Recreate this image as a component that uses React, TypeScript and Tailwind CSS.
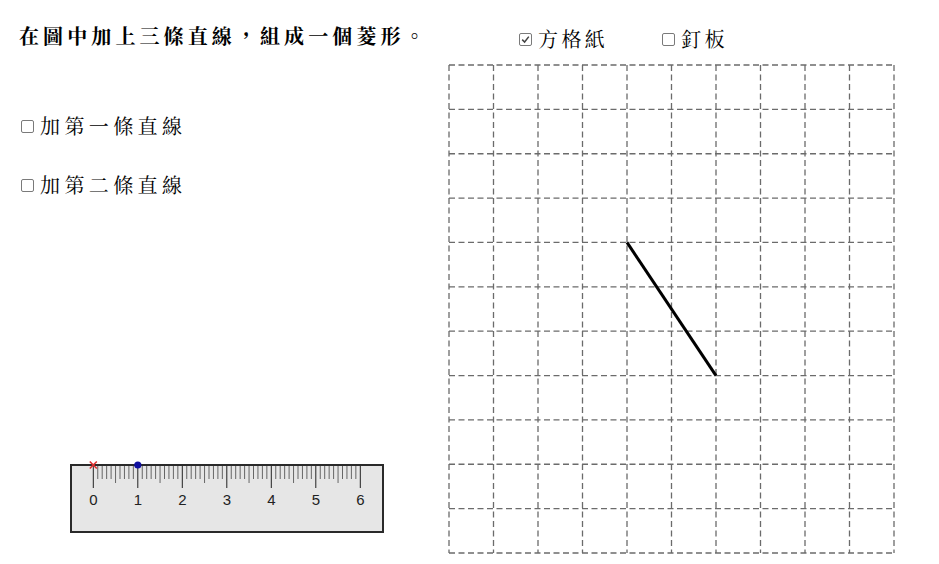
import React from "react";

const CJK = "font-['Noto_Serif_CJK_TC','Noto_Sans_CJK_TC',serif]";

// small checkbox square like the GeoGebra ones
const Box = ({ checked = false }: { checked?: boolean }) => (
  <span className="inline-flex w-[13px] h-[13px] shrink-0 items-center justify-center rounded-[2px] border-[1.5px] border-[#7a7a7a] bg-white">
    {checked && (
      <svg width="9" height="9" viewBox="0 0 9 9">
        <path d="M1.2 4.6 L3.6 7 L7.8 1.6" fill="none" stroke="#444" strokeWidth="1.5" />
      </svg>
    )}
  </span>
);

const CELL_W = 44.5;
const CELL_H = 488 / 11;

const Grid = () => {
  const cols = Array.from({ length: 11 }, (_, i) => i);
  const rows = Array.from({ length: 12 }, (_, i) => i);
  return (
    <svg width="452" height="494" className="block">
      {cols.map((i) => (
        <line
          key={"v" + i}
          x1={2 + i * CELL_W}
          y1={2}
          x2={2 + i * CELL_W}
          y2={2 + 11 * CELL_H}
          stroke="#6b6b6b"
          strokeWidth="1.3"
          strokeDasharray="6 3.5"
        />
      ))}
      {rows.map((j) => (
        <line
          key={"h" + j}
          x1={2}
          y1={2 + j * CELL_H}
          x2={2 + 10 * CELL_W}
          y2={2 + j * CELL_H}
          stroke="#6b6b6b"
          strokeWidth="1.3"
          strokeDasharray="6 3.5"
        />
      ))}
      <line
        x1={2 + 4 * CELL_W}
        y1={2 + 4 * CELL_H}
        x2={2 + 6 * CELL_W}
        y2={2 + 7 * CELL_H}
        stroke="#000"
        strokeWidth="3"
      />
    </svg>
  );
};

const Ruler = () => {
  const x0 = 27.3;
  const unit = 44.5;
  const ticks = Array.from({ length: 61 }, (_, i) => i);
  return (
    <svg width="324" height="78" className="block">
      <rect x="5" y="6" width="312" height="67" fill="#e6e6e6" stroke="#2a2a2a" strokeWidth="2" />
      {ticks.map((t) => {
        const len = t % 10 === 0 ? 22 : t % 5 === 0 ? 17 : 13;
        return (
          <line
            key={t}
            x1={x0 + (t * unit) / 10}
            y1={7}
            x2={x0 + (t * unit) / 10}
            y2={7 + len}
            stroke={t % 10 === 0 ? "#222" : "#666"}
            strokeWidth="1"
          />
        );
      })}
      {[0, 1, 2, 3, 4, 5, 6].map((n) => (
        <text
          key={n}
          x={x0 + n * unit}
          y={45.5}
          textAnchor="middle"
          fontSize="15"
          fontFamily="Liberation Sans, Arial, sans-serif"
          fill="#222"
        >
          {n}
        </text>
      ))}
      {/* red x at zero */}
      <path d={`M${x0 - 3.5} 2.5 L${x0 + 3.5} 9.5 M${x0 + 3.5} 2.5 L${x0 - 3.5} 9.5`} stroke="#e03030" strokeWidth="1.6" />
      {/* blue point at one */}
      <circle cx={x0 + unit} cy={6} r="3.6" fill="#1010a0" />
    </svg>
  );
};

export default function App() {
  return (
    <div className={`flex w-[939px] h-[564px] bg-white text-black ${CJK}`}>
      {/* ============= Left ============= */}
      <div className="flex flex-col w-[447px] h-full">
        <div className="pl-[19px] pt-[24px] text-[20px] leading-[24px] font-bold tracking-[4.1px] whitespace-nowrap">
          在圖中加上三條直線，組成一個菱形。
        </div>
        <div className="flex flex-col gap-[35px] pl-[21px] mt-[66px]">
          <label className="flex items-center gap-[6px] text-[20px] leading-[24px] tracking-[4.4px]">
            <Box />
            加第一條直線
          </label>
          <label className="flex items-center gap-[6px] text-[20px] leading-[24px] tracking-[4.4px]">
            <Box />
            加第二條直線
          </label>
        </div>
        <div className="mt-auto mb-[27px] ml-[66px]">
          <Ruler />
        </div>
      </div>
      {/* ============= Right ============= */}
      <div className="flex flex-col">
        <div className="flex items-center h-[24px] mt-[27px] pl-[72px] gap-[54px] text-[20px] tracking-[3.4px]">
          <label className="flex items-center gap-[6px]">
            <Box checked />
            方格紙
          </label>
          <label className="flex items-center gap-[6px]">
            <Box />
            釘板
          </label>
        </div>
        <div className="mt-[12px]">
          <Grid />
        </div>
      </div>
    </div>
  );
}
